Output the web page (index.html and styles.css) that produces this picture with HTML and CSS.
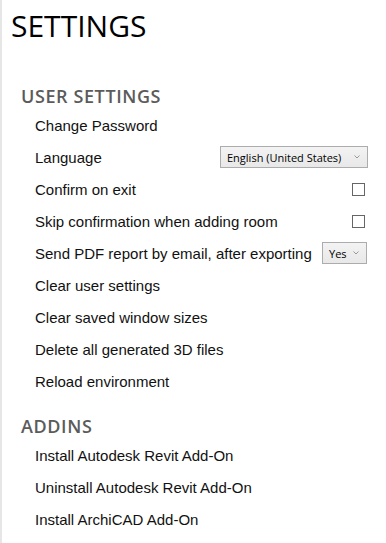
FILE: index.html
```html
<!DOCTYPE html>
<html lang="en">
<head>
    <meta charset="UTF-8">
    <meta name="viewport" content="width=device-width, initial-scale=1.0">
    <title>Settings</title>
    <link rel="stylesheet" href="styles.css">
</head>
<body>
    <div class="page">
        <h1 class="title">SETTINGS</h1>

        <h2 class="section">USER SETTINGS</h2>
        <div class="row">Change Password</div>
        <div class="row">
            <span>Language</span>
            <div class="select select-wide">
                <span>English (United States)</span>
                <svg class="chev" width="6" height="4" viewBox="0 0 6 4"><path d="M0.5 0.5 L3 3 L5.5 0.5" fill="none" stroke="#999" stroke-width="1"/></svg>
            </div>
        </div>
        <div class="row">
            <span>Confirm on exit</span>
            <span class="check"></span>
        </div>
        <div class="row">
            <span>Skip confirmation when adding room</span>
            <span class="check"></span>
        </div>
        <div class="row">
            <span>Send PDF report by email, after exporting</span>
            <div class="select select-small">
                <span>Yes</span>
                <svg class="chev" width="6" height="4" viewBox="0 0 6 4"><path d="M0.5 0.5 L3 3 L5.5 0.5" fill="none" stroke="#999" stroke-width="1"/></svg>
            </div>
        </div>
        <div class="row">Clear user settings</div>
        <div class="row">Clear saved window sizes</div>
        <div class="row">Delete all generated 3D files</div>
        <div class="row">Reload environment</div>

        <h2 class="section section-gap">ADDINS</h2>
        <div class="row">Install Autodesk Revit Add-On</div>
        <div class="row">Uninstall Autodesk Revit Add-On</div>
        <div class="row">Install ArchiCAD Add-On</div>
    </div>
</body>
</html>
```

FILE: styles.css
```css
body {
    margin: 0;
    padding: 0;
    background: #fff;
    font-family: "Liberation Sans", Arial, sans-serif;
    color: #111;
}
.page {
    border-left: 2px solid #e6e6e6;
    min-height: 543px;
    box-sizing: border-box;
    padding-top: 6px;
}
.title {
    margin: 0;
    padding-left: 9px;
    font-family: "Open Sans", sans-serif;
    font-weight: 400;
    font-size: 30px;
    line-height: 40px;
    color: #000;
}
.section {
    margin: 38px 0 1px;
    padding-left: 19px;
    font-family: "Open Sans", sans-serif;
    font-weight: 600;
    font-size: 18px;
    line-height: 24px;
    letter-spacing: 0.6px;
    color: #5b5b5b;
}
.section-gap {
    margin-top: 17px;
}
.row {
    display: flex;
    align-items: center;
    justify-content: space-between;
    height: 32px;
    padding-left: 33px;
    padding-right: 18px;
    font-size: 15px;
}
.select {
    display: flex;
    align-items: center;
    justify-content: space-between;
    box-sizing: border-box;
    height: 22px;
    padding: 0 7px 0 6px;
    border: 1px solid #acacac;
    background: linear-gradient(#f3f3f3, #e8e8e8);
    font-family: "Open Sans", sans-serif;
    font-size: 11px;
    color: #000;
}
.select-wide {
    width: 148px;
}
.select-small {
    width: 45px;
    margin-right: 1px;
}
.chev {
    display: block;
}
.check {
    width: 13px;
    height: 13px;
    box-sizing: border-box;
    border: 1px solid #666;
    margin-right: 3px;
}
```
